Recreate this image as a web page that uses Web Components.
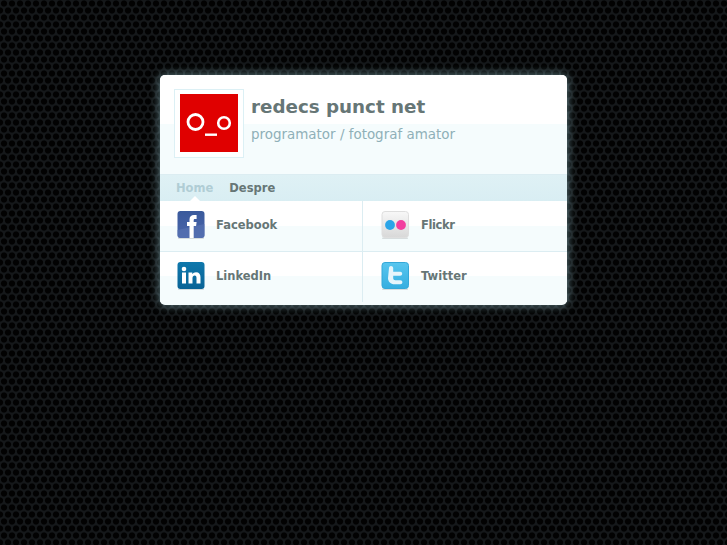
<!DOCTYPE html>
<html><head><meta charset="utf-8"><style>
html,body{margin:0;height:100%}
body{background-color:#15181a;background-image:radial-gradient(circle at 4px 3.5px,#020202 0,#020202 2.6px,transparent 3.6px),radial-gradient(circle at 4px 3.5px,#020202 0,#020202 2.6px,transparent 3.6px);background-size:8px 14px;background-position:0 0,4px 7px;font-family:"DejaVu Sans",sans-serif;padding-top:75px;box-sizing:border-box;overflow:hidden}
</style></head><body>
<profile-card>
<card-header slot="header" title-text="redecs punct net" sub="programator / fotograf amator"></card-header>
<nav-bar slot="nav"><nav-link active>Home</nav-link><nav-link>Despre</nav-link></nav-bar>
<social-link slot="links" kind="facebook">Facebook</social-link>
<social-link slot="links" kind="flickr">Flickr</social-link>
<social-link slot="links" kind="linkedin">LinkedIn</social-link>
<social-link slot="links" kind="twitter">Twitter</social-link>
</profile-card>
<script>
function def(name,html){customElements.define(name,class extends HTMLElement{constructor(){super();this.attachShadow({mode:'open'}).innerHTML=typeof html==='function'?html(this):html;}});}
const SH=`<rect x="1" y="26.500" width="26" height="1.500" rx=".7" fill="#000" opacity=".12"/>`;
const ICONS={
facebook:`<defs><linearGradient id="g" x1="0" y1="0" x2="0" y2="1"><stop offset="0" stop-color="#3a5a9c"/><stop offset="1" stop-color="#4a65ab"/></linearGradient></defs>${SH}<rect x=".5" y="0" width="27" height="27" rx="3" fill="url(#g)"/><path d="M.5 19 L27.500 13 V24 Q27.500 27 24.500 27 H3.500 Q.5 27 .5 24Z" fill="#5a74b4" opacity=".6"/><path d="M12.500 27V15H10V11h2.500V8.500c0-3 1.700-4.500 4.500-4.500h2.600v4H18c-.9 0-1.300.5-1.300 1.300V11h2.900l-.5 4h-2.400v12z" fill="#fff"/>`,
flickr:`<defs><linearGradient id="g" x1="0" y1="0" x2="0" y2="1"><stop offset="0" stop-color="#f8f8f8"/><stop offset="1" stop-color="#d8d8d8"/></linearGradient></defs>${SH}<rect x="1" y=".5" width="26.500" height="26" rx="3" fill="url(#g)" stroke="#dedede"/><circle cx="9" cy="14" r="4.900" fill="#2ba5e8"/><circle cx="20" cy="14" r="4.900" fill="#f23f9f"/>`,
linkedin:`<defs><linearGradient id="g" x1="0" y1="0" x2="0" y2="1"><stop offset="0" stop-color="#0f78ac"/><stop offset="1" stop-color="#0a6396"/></linearGradient></defs>${SH}<rect x=".5" y="0" width="27" height="27" rx="3" fill="url(#g)"/><rect x="5" y="10.500" width="4" height="11" fill="#fff"/><circle cx="7" cy="7" r="2.300" fill="#fff"/><path d="M11.500 10.500h3.800v1.700c.7-1.200 2-2 3.700-2 3.200 0 4.500 2 4.500 5v6.300h-4V16c0-1.500-.5-2.400-1.800-2.400s-2.200 1-2.200 2.400v5.500h-4z" fill="#fff"/>`,
twitter:`<defs><linearGradient id="g" x1="0" y1="0" x2="0" y2="1"><stop offset="0" stop-color="#58c6ef"/><stop offset="1" stop-color="#35aee0"/></linearGradient></defs>${SH}<rect x="1" y=".5" width="26.500" height="26" rx="3" fill="url(#g)" stroke="#35a8d8"/><path d="M8 6c0-1.200.9-2 2-2s2.200.8 2.200 2v3.700h7c1.200 0 2 .9 2 2s-.8 2-2 2h-7v2.600c0 1.200.9 2 2.200 2h5c1.200 0 2 .9 2 2s-.8 2-2 2h-6c-3.600 0-6.400-2.600-6.400-6z" fill="#e6f5fb"/>`};
def('profile-card',`<style>
:host{display:block;width:407px;height:230px;margin-left:160px;border-radius:5px;background:#f5fcfd;box-shadow:0 0 10px 1px rgba(170,225,235,.5);overflow:hidden}
.links{display:grid;grid-template-columns:203px 204px;}
</style><slot name="header"></slot><slot name="nav"></slot><div class="links"><slot name="links"></slot></div>`);
def('card-header',h=>`<style>
:host{display:flex;box-sizing:border-box;height:100px;border-bottom:1px solid #dcedf2;background:linear-gradient(#fff 49px,#f5fcfd 49px);padding:14px 0 0 14px;gap:7px}
.av{box-sizing:border-box;width:70px;height:69px;padding:4px 5px 5px;background:#fff;border:1px solid #dcf0f5}
svg{display:block}
h1{margin:5px 0 0;font:bold 18.300px/26px "DejaVu Sans",sans-serif;color:#667676}
p{margin:6px 0 0;font:13.450px/18px "DejaVu Sans",sans-serif;color:#8fb0b8}
</style><div class="av"><svg width="58" height="58" viewBox="0 0 58 58"><rect width="58" height="58" fill="#e00000"/><circle cx="15.500" cy="28" r="7.500" fill="none" stroke="#fff" stroke-width="2.800"/><circle cx="44" cy="29" r="5.800" fill="none" stroke="#fff" stroke-width="2.600"/><rect x="25" y="39.500" width="12" height="2.400" fill="#fff"/></svg></div><div><h1>${h.getAttribute('title-text')}</h1><p>${h.getAttribute('sub')}</p></div>`);
def('nav-bar',`<style>:host{display:flex;box-sizing:border-box;height:26px;background:linear-gradient(#dff1f5,#d9eef3);padding-left:16px;gap:16px;align-items:center}</style><slot></slot>`);
def('nav-link',`<style>:host{display:block;position:relative;font:bold 11.500px/26px "DejaVu Sans",sans-serif;color:#667676}
:host([active]){color:#b0cdd5}
:host([active])::after{content:"";position:absolute;left:50%;margin-left:-5px;bottom:0;border:5px solid transparent;border-top:0;border-bottom-color:#fff}
</style><slot></slot>`);
def('social-link',h=>`<style>:host{display:flex;box-sizing:border-box;height:51px;align-items:center;padding:0 0 2px 17px;gap:11px;font:bold 11.500px/14px "DejaVu Sans",sans-serif;color:#667676;background:linear-gradient(#fff 25px,#f5fcfd 25px);border-bottom:1px solid #dcedf2}
:host([kind=facebook]),:host([kind=linkedin]){border-right:1px solid #dcedf2}
:host([kind=flickr]),:host([kind=twitter]){padding-left:18px;gap:12px}
:host([kind=flickr]){letter-spacing:-.4px}
:host([kind=linkedin]),:host([kind=twitter]){border-bottom:0;height:50px;padding-bottom:2px;background:linear-gradient(#fff 24px,#f5fcfd 24px)}
svg{display:block}
</style><svg width="28" height="28" viewBox="0 0 28 28">${ICONS[h.getAttribute('kind')]}</svg><span><slot></slot></span>`);
</script></body></html>
